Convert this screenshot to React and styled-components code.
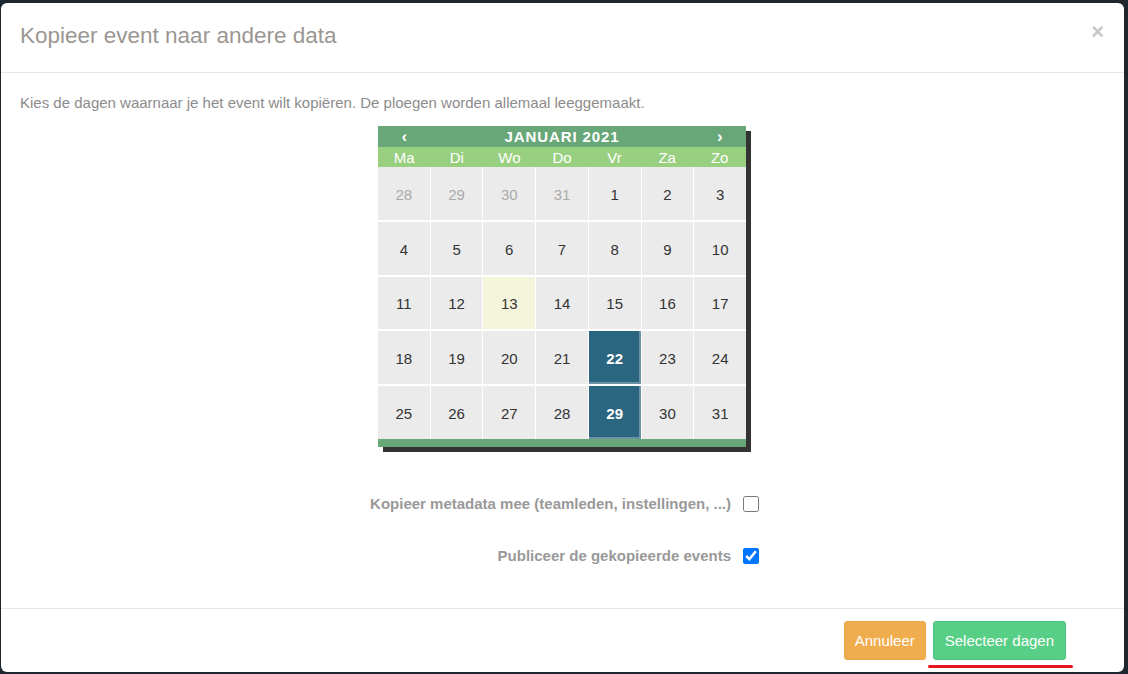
import React from "react";
import styled, { createGlobalStyle } from "styled-components";

const Global = createGlobalStyle`
  html, body { margin: 0; padding: 0; }
  body {
    background: #1f282e;
    font-family: "Liberation Sans", Arial, sans-serif;
    width: 1128px;
    height: 674px;
    overflow: hidden;
  }
`;

const Backdrop = styled.div`
  box-sizing: border-box;
  width: 1128px;
  height: 674px;
  padding: 3px 4px 2px 1px;
`;

const Modal = styled.div`
  box-sizing: border-box;
  height: 100%;
  background: #fff;
  border-radius: 6px;
  display: flex;
  flex-direction: column;
`;

const Header = styled.div`
  box-sizing: border-box;
  height: 70px;
  padding: 0 20px 0 19px;
  border-bottom: 1px solid #e5e5e5;
  display: flex;
  align-items: center;
  justify-content: space-between;
`;

const Title = styled.h4`
  margin: 0;
  font-size: 22.5px;
  font-weight: normal;
  color: #9b9692;
  line-height: 1;
  padding-bottom: 2px;
`;

const Close = styled.span`
  font-size: 22px;
  font-weight: bold;
  color: #c8c8c8;
  line-height: 1;
  margin-right: 0px;
  margin-bottom: 12px;
`;

const Body = styled.div`
  flex: 1;
  padding: 20px 20px 0 19px;
  display: flex;
  flex-direction: column;
`;

const Intro = styled.p`
  margin: 0;
  font-size: 15px;
  line-height: 20px;
  color: #8c8c8c;
`;

const CalendarWrap = styled.div`
  align-self: center;
  margin-top: 13px;
  width: 368px;
  box-shadow: 5px 5px 0 0 #333;
  background: #fff;
`;

const HeaderRow = styled.div`
  display: grid;
  grid-template-columns: repeat(7, 1fr);
  height: 21px;
  background: #68a777;
  color: #fff;
  align-items: center;
  text-align: center;
`;

const Arrow = styled.span`
  font-size: 17px;
  line-height: 21px;
  font-weight: bold;
`;

const MonthTitle = styled.span`
  grid-column: span 5;
  font-size: 15px;
  font-weight: bold;
  letter-spacing: 0.9px;
  line-height: 21px;
`;

const WeekRow = styled.div`
  display: grid;
  grid-template-columns: repeat(7, 1fr);
  height: 20px;
  background: #99cf80;
  color: #fff;
  text-align: center;
  font-size: 15px;
  line-height: 21px;
`;

const DayGrid = styled.div`
  display: grid;
  grid-template-columns: repeat(7, 1fr);
  grid-auto-rows: 52.8px;
  column-gap: 1px;
  row-gap: 2px;
  background: #fff;
`;

const Day = styled.div`
  display: flex;
  align-items: center;
  justify-content: center;
  padding-top: 2px;
  font-size: 15px;
  background: ${(p) => (p.$selected ? "#2b6680" : p.$today ? "#f5f5dc" : "#ebebeb")};
  color: ${(p) => (p.$selected ? "#fff" : p.$muted ? "#aaa" : "#333")};
  font-weight: ${(p) => (p.$selected ? "bold" : "normal")};
  box-shadow: ${(p) => (p.$selected ? "inset -2px -2px 0 #6a93a8" : "none")};
`;

const FooterBar = styled.div`
  height: 8px;
  background: #68a777;
`;

const Form = styled.div`
  margin-top: 49px;
  display: flex;
  flex-direction: column;
  gap: 36px;
`;

const FormRow = styled.label`
  display: flex;
  align-items: center;
  height: 16px;
`;

const Label = styled.span`
  box-sizing: border-box;
  width: 711px;
  text-align: right;
  font-size: 15px;
  font-weight: bold;
  color: #999;
`;

const Check = styled.input`
  margin: 0 0 0 12px;
  width: 16px;
  height: 16px;
  accent-color: #0075ff;
`;

const Footer = styled.div`
  box-sizing: border-box;
  height: 64px;
  border-top: 1px solid #e5e5e5;
  display: flex;
  justify-content: flex-end;
  align-items: flex-start;
  gap: 7px;
  padding: 12px 58px 0 0;
`;

const Button = styled.button`
  box-sizing: border-box;
  height: 39px;
  padding: 0 ${(p) => (p.$variant === "warning" ? "10px" : "11px")};
  font-family: "Liberation Sans", Arial, sans-serif;
  font-size: 15px;
  color: #fff;
  border-radius: 3px;
  border: 1px solid ${(p) => (p.$variant === "warning" ? "#eba545" : "#4cc07c")};
  background: ${(p) => (p.$variant === "warning" ? "#f0ad4e" : "#58cf86")};
  cursor: pointer;
`;

const Marked = styled.div`
  position: relative;
`;

const Underline = styled.span`
  position: absolute;
  left: -5px;
  right: -7px;
  bottom: -8px;
  height: 3px;
  border-radius: 2px;
  background: #e8141f;
`;

const weekdays = ["Ma", "Di", "Wo", "Do", "Vr", "Za", "Zo"];

const days = [
  { n: 28, muted: true }, { n: 29, muted: true }, { n: 30, muted: true }, { n: 31, muted: true },
  ...Array.from({ length: 31 }, (_, i) => ({
    n: i + 1,
    today: i + 1 === 13,
    selected: i + 1 === 22 || i + 1 === 29,
  })),
];

export default function App() {
  return (
    <>
      <Global />
      <Backdrop>
        <Modal>
          <Header>
            <Title>Kopieer event naar andere data</Title>
            <Close>×</Close>
          </Header>
          <Body>
            <Intro>Kies de dagen waarnaar je het event wilt kopiëren. De ploegen worden allemaal leeggemaakt.</Intro>
            <CalendarWrap>
              <HeaderRow>
                <Arrow>‹</Arrow>
                <MonthTitle>JANUARI 2021</MonthTitle>
                <Arrow>›</Arrow>
              </HeaderRow>
              <WeekRow>
                {weekdays.map((d) => (
                  <span key={d}>{d}</span>
                ))}
              </WeekRow>
              <DayGrid>
                {days.map((d, i) => (
                  <Day key={i} $muted={d.muted} $today={d.today} $selected={d.selected}>
                    {d.n}
                  </Day>
                ))}
              </DayGrid>
              <FooterBar />
            </CalendarWrap>
            <Form>
              <FormRow>
                <Label>Kopieer metadata mee (teamleden, instellingen, ...)</Label>
                <Check type="checkbox" />
              </FormRow>
              <FormRow>
                <Label>Publiceer de gekopieerde events</Label>
                <Check type="checkbox" defaultChecked />
              </FormRow>
            </Form>
          </Body>
          <Footer>
            <Button $variant="warning">Annuleer</Button>
            <Marked>
              <Button $variant="success">Selecteer dagen</Button>
              <Underline />
            </Marked>
          </Footer>
        </Modal>
      </Backdrop>
    </>
  );
}
